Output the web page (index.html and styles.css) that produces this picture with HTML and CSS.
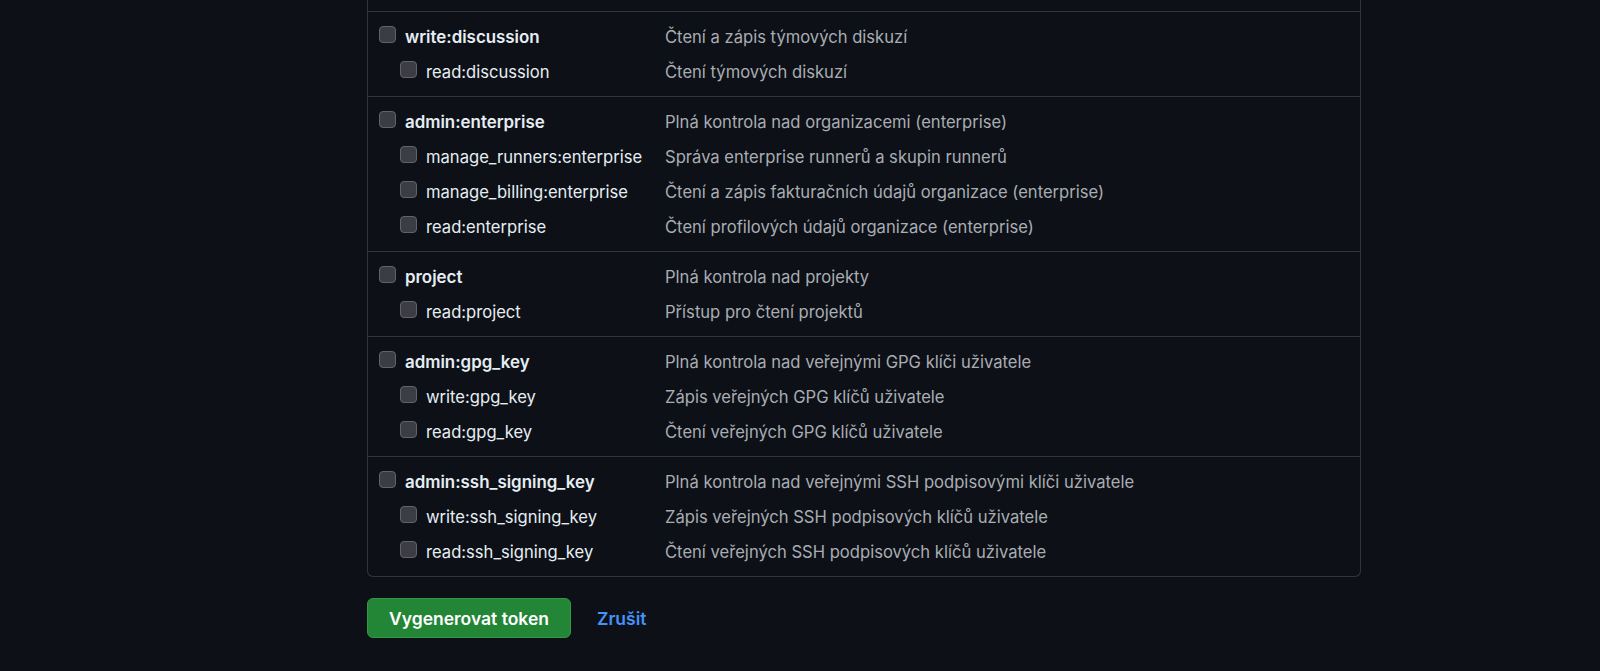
FILE: index.html
```html
<!DOCTYPE html>
<html lang="cs">
<head>
<meta charset="utf-8">
<title>Nový osobní přístupový token</title>
<link rel="stylesheet" href="styles.css">
</head>
<body>
<main class="page">
  <div class="scopes">
    <div class="group-tail"></div>

    <div class="group">
      <label class="row top"><span class="name"><input type="checkbox"><span>write:discussion</span></span><span class="desc">Čtení a zápis týmových diskuzí</span></label>
      <label class="row sub"><span class="name"><input type="checkbox"><span>read:discussion</span></span><span class="desc">Čtení týmových diskuzí</span></label>
    </div>

    <div class="group">
      <label class="row top"><span class="name"><input type="checkbox"><span>admin:enterprise</span></span><span class="desc">Plná kontrola nad organizacemi (enterprise)</span></label>
      <label class="row sub"><span class="name"><input type="checkbox"><span>manage_runners:enterprise</span></span><span class="desc">Správa enterprise runnerů a skupin runnerů</span></label>
      <label class="row sub"><span class="name"><input type="checkbox"><span>manage_billing:enterprise</span></span><span class="desc">Čtení a zápis fakturačních údajů organizace (enterprise)</span></label>
      <label class="row sub"><span class="name"><input type="checkbox"><span>read:enterprise</span></span><span class="desc">Čtení profilových údajů organizace (enterprise)</span></label>
    </div>

    <div class="group">
      <label class="row top"><span class="name"><input type="checkbox"><span>project</span></span><span class="desc">Plná kontrola nad projekty</span></label>
      <label class="row sub"><span class="name"><input type="checkbox"><span>read:project</span></span><span class="desc">Přístup pro čtení projektů</span></label>
    </div>

    <div class="group">
      <label class="row top"><span class="name"><input type="checkbox"><span>admin:gpg_key</span></span><span class="desc">Plná kontrola nad veřejnými GPG klíči uživatele</span></label>
      <label class="row sub"><span class="name"><input type="checkbox"><span>write:gpg_key</span></span><span class="desc">Zápis veřejných GPG klíčů uživatele</span></label>
      <label class="row sub"><span class="name"><input type="checkbox"><span>read:gpg_key</span></span><span class="desc">Čtení veřejných GPG klíčů uživatele</span></label>
    </div>

    <div class="group">
      <label class="row top"><span class="name"><input type="checkbox"><span>admin:ssh_signing_key</span></span><span class="desc">Plná kontrola nad veřejnými SSH podpisovými klíči uživatele</span></label>
      <label class="row sub"><span class="name"><input type="checkbox"><span>write:ssh_signing_key</span></span><span class="desc">Zápis veřejných SSH podpisových klíčů uživatele</span></label>
      <label class="row sub"><span class="name"><input type="checkbox"><span>read:ssh_signing_key</span></span><span class="desc">Čtení veřejných SSH podpisových klíčů uživatele</span></label>
    </div>
  </div>

  <div class="actions">
    <button class="btn-primary" type="button">Vygenerovat token</button>
    <a class="cancel" href="#">Zrušit</a>
  </div>
</main>
</body>
</html>
```
FILE: styles.css
```css
html, body {
  margin: 0;
  padding: 0;
  background: #0d1117;
}

body {
  font-family: Inter, "Noto Sans", "Liberation Sans", sans-serif;
  font-size: 16.6px;
  color: #e6edf3;
}

.page {
  padding-left: 367px;
  width: 994px;
}

.scopes {
  border: 1px solid #30363d;
  border-top: 0;
  border-radius: 0 0 6px 6px;
}

.group-tail {
  height: 11px;
}

.group {
  border-top: 1px solid #30363d;
  padding: 7px 0 7px;
}

.row {
  display: grid;
  grid-template-columns: 286px 1fr;
  align-items: center;
  height: 35px;
  padding-left: 11px;
  cursor: pointer;
}

.name {
  display: flex;
  align-items: center;
  gap: 9px;
  white-space: nowrap;
}

.top .name {
  font-size: 16.9px;
  font-weight: 600;
}

.sub .name {
  padding-left: 21px;
  font-weight: 400;
}

.name input {
  appearance: none;
  -webkit-appearance: none;
  width: 17px;
  height: 17px;
  margin: 0 0 4px 0;
  flex: none;
  background: #3b3d42;
  border: 1px solid #606369;
  border-radius: 4px;
}

.desc {
  color: #a9adb3;
  white-space: nowrap;
}

.actions {
  display: flex;
  align-items: center;
  gap: 26px;
  margin-top: 21px;
}

.btn-primary {
  height: 40px;
  padding: 0 21px;
  font-family: inherit;
  font-size: 17.5px;
  font-weight: 600;
  color: #ffffff;
  background: #238636;
  border: 1px solid #2f9a44;
  border-radius: 6px;
  cursor: pointer;
}

.cancel {
  font-size: 17.5px;
  font-weight: 600;
  color: #4493f8;
  text-decoration: none;
}
```
